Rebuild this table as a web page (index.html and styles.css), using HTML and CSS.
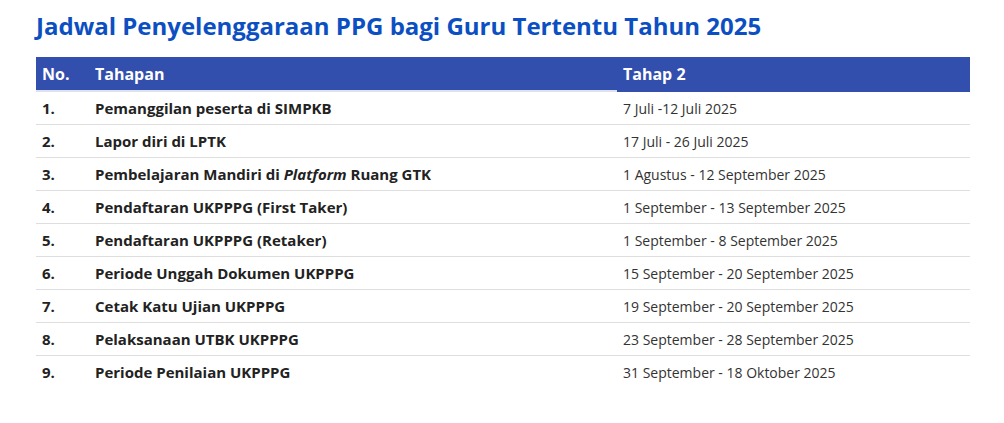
FILE: index.html
```html
<!DOCTYPE html>
<html lang="id">
<head>
<meta charset="utf-8">
<title>Jadwal PPG</title>
<link rel="stylesheet" href="styles.css">
</head>
<body>
<div class="wrap">
  <h2 class="title">Jadwal Penyelenggaraan PPG bagi Guru Tertentu Tahun 2025</h2>
  <table class="jadwal">
    <colgroup>
      <col class="c-no">
      <col class="c-step">
      <col class="c-date">
    </colgroup>
    <thead>
      <tr><th>No.</th><th>Tahapan</th><th class="th-date">Tahap 2</th></tr>
    </thead>
    <tbody>
      <tr><td class="b">1.</td><td class="b">Pemanggilan peserta di SIMPKB</td><td>7 Juli -12 Juli 2025</td></tr>
      <tr><td class="b">2.</td><td class="b">Lapor diri di LPTK</td><td>17 Juli - 26 Juli 2025</td></tr>
      <tr><td class="b">3.</td><td class="b">Pembelajaran Mandiri di <em>Platform</em> Ruang GTK</td><td>1 Agustus - 12 September 2025</td></tr>
      <tr><td class="b">4.</td><td class="b">Pendaftaran UKPPPG (First Taker)</td><td>1 September - 13 September 2025</td></tr>
      <tr><td class="b">5.</td><td class="b">Pendaftaran UKPPPG (Retaker)</td><td>1 September - 8 September 2025</td></tr>
      <tr><td class="b">6.</td><td class="b">Periode Unggah Dokumen UKPPPG</td><td>15 September - 20 September 2025</td></tr>
      <tr><td class="b">7.</td><td class="b">Cetak Katu Ujian UKPPPG</td><td>19 September - 20 September 2025</td></tr>
      <tr><td class="b">8.</td><td class="b">Pelaksanaan UTBK UKPPPG</td><td>23 September - 28 September 2025</td></tr>
      <tr><td class="b">9.</td><td class="b">Periode Penilaian UKPPPG</td><td>31 September - 18 Oktober 2025</td></tr>
    </tbody>
  </table>
</div>
</body>
</html>
```
FILE: styles.css
```css
html, body {
  margin: 0;
  padding: 0;
  background: #ffffff;
}
body {
  font-family: "Open Sans", "Noto Sans", sans-serif;
  color: #222222;
}
.wrap {
  padding: 9px 34px 0 36px;
}
.title {
  margin: 0 0 14px 0;
  font-size: 24px;
  line-height: 34px;
  font-weight: 700;
  color: #0c4fc2;
}
.jadwal {
  width: 934px;
  border-collapse: collapse;
  table-layout: fixed;
  font-size: 14px;
}
.c-no { width: 53px; }
.c-step { width: 528px; }
.c-date { width: 353px; }
.jadwal th {
  background: #334fad;
  color: #ffffff;
  font-weight: 700;
  font-size: 16px;
  text-align: left;
  padding: 0 6px;
  height: 33px;
  border-bottom: 2px solid #dde2ee;
}
.jadwal th.th-date {
  border-bottom-color: #334fad;
}
.jadwal td {
  padding: 0 6px;
  height: 32px;
  border-bottom: 1px solid #dedede;
  color: #333333;
  vertical-align: middle;
}
.jadwal td.b {
  font-size: 15px;
  font-weight: 700;
  color: #222222;
}
.jadwal tbody tr:last-child td {
  border-bottom: none;
}
.jadwal em {
  font-style: italic;
}
```
